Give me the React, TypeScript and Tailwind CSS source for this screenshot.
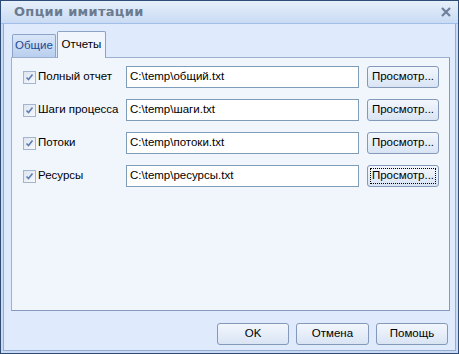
import React from 'react'

const rows = [
  { label: 'Полный отчет', path: 'C:\\temp\\общий.txt' },
  { label: 'Шаги процесса', path: 'C:\\temp\\шаги.txt' },
  { label: 'Потоки', path: 'C:\\temp\\потоки.txt' },
  { label: 'Ресурсы', path: 'C:\\temp\\ресурсы.txt', focused: true },
]

const Check = () => (
  <span className="flex h-[13px] w-[13px] shrink-0 items-center justify-center border border-[#a3b4ce] bg-gradient-to-br from-[#dde5f0] to-[#f7f9fc]">
    <svg width="9" height="9" viewBox="0 0 9 9">
      <path d="M1.5 4.5 L3.5 6.5 L7.5 1.5" fill="none" stroke="#5b7cb6" strokeWidth="1.6" />
    </svg>
  </span>
)

const Btn = ({ children, focused, className = '' }: { children: React.ReactNode; focused?: boolean; className?: string }) => (
  <button
    className={`relative flex items-center justify-center rounded-[3px] border border-[#8498b8] bg-gradient-to-b from-[#f3f7fd] to-[#d9e4f4] text-[11.5px] font-normal text-black ${className}`}
  >
    {focused && <span className="absolute inset-[2px] border border-dotted border-black" />}
    {children}
  </button>
)

export default function App() {
  return (
    <div
      className="flex h-[354px] w-[459px] flex-col border border-[#2e4c78] bg-[#c9daf2] text-black"
      style={{ fontFamily: '"Liberation Sans", Arial, sans-serif' }}
    >
      {/* title bar */}
      <div className="flex h-[23px] items-center justify-between border-b border-[#9fbde6] bg-gradient-to-b from-[#e6effb] to-[#c9dbf3] pl-[13px] pr-[7px]">
        <span className="text-[13px] font-bold tracking-[0.3px] text-[#6b7b8f]" style={{ fontFamily: '"DejaVu Sans", sans-serif' }}>
          Опции имитации
        </span>
        <svg width="10" height="10" viewBox="0 0 10 10">
          <path d="M1 1 L9 9 M9 1 L1 9" stroke="#6d7f99" strokeWidth="2.2" />
        </svg>
      </div>

      <div className="mx-[2px] mb-[2px] flex flex-1 flex-col border-x border-b border-[#93acd2] bg-[#dfeafc] px-[7px]">
        {/* tabs */}
        <div className="mt-[7px] flex items-end pl-[1px]">
          <div className="flex h-[23px] w-[44px] items-center justify-center rounded-t-[2px] border border-b-0 border-[#8ca2c6] bg-gradient-to-b from-[#d9e6f8] to-[#b9cfee] text-[11.5px] text-[#1d4a96]">
            Общие
          </div>
          <div className="relative -mb-px ml-[1px] flex h-[27px] w-[49px] items-center justify-center rounded-t-[2px] border border-b-0 border-[#8ca2c6] bg-[#f1f6fd] pb-[1px] text-[11.5px] text-black">
            Отчеты
          </div>
        </div>

        {/* panel */}
        <div className="flex h-[254px] w-[439px] flex-col gap-[11px] border border-[#9cb0cf] border-b-[#8499bd] border-r-[#8499bd] bg-[#f1f6fd] pl-[11px] pt-[8px]">
          {rows.map((r) => (
            <div key={r.label} className="flex h-[22px] items-center">
              <div className="flex w-[103px] items-center gap-[2px]">
                <Check />
                <span className="whitespace-nowrap text-[11.5px] text-black">{r.label}</span>
              </div>
              <div className="flex h-[22px] w-[233px] items-center border border-[#7f9db9] bg-white pl-[3px] text-[11.5px] text-black">
                {r.path}
              </div>
              <Btn focused={r.focused} className="ml-[8px] h-[22px] w-[72px]">
                Просмотр...
              </Btn>
            </div>
          ))}
        </div>

        {/* bottom buttons */}
        <div className="mt-[12px] flex justify-end gap-[7px]">
          <Btn className="h-[22px] w-[72px]">OK</Btn>
          <Btn className="h-[22px] w-[73px]">Отмена</Btn>
          <Btn className="h-[22px] w-[72px]">Помощь</Btn>
        </div>
      </div>
    </div>
  )
}
